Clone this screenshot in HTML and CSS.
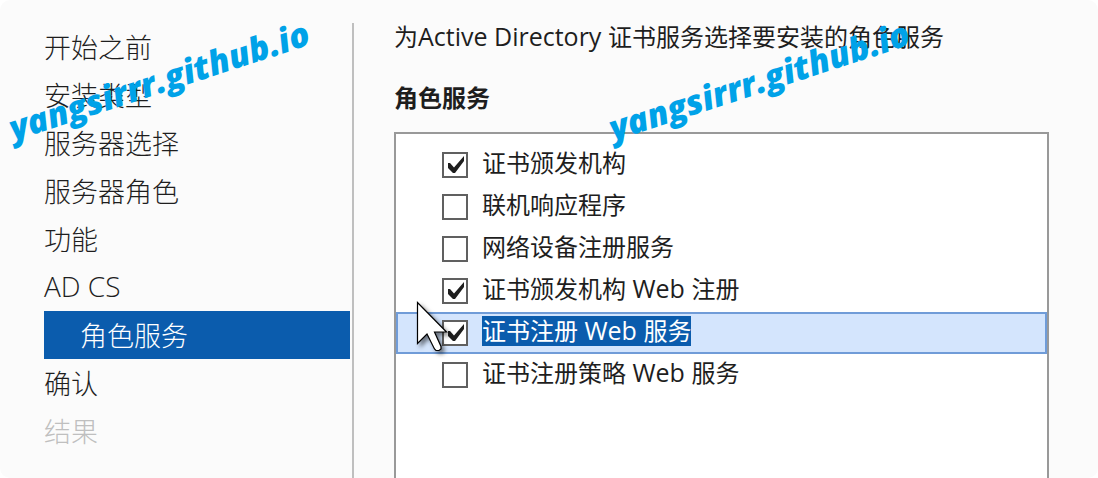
FILE: index.html
```
<!DOCTYPE html>
<html lang="zh-CN">
<head>
<meta charset="utf-8">
<meta name="viewport" content="width=device-width, initial-scale=1">
<title>角色服务</title>
<link rel="stylesheet" href="styles.css">
</head>
<body>
<div class="wizard">
  <nav class="steps">
    <ul class="step-list">
      <li><a class="step" href="#">开始之前</a></li>
      <li><a class="step" href="#">安装类型</a></li>
      <li><a class="step" href="#">服务器选择</a></li>
      <li><a class="step" href="#">服务器角色</a></li>
      <li><a class="step" href="#">功能</a></li>
      <li><a class="step step-latin" href="#">AD CS</a></li>
      <li><a class="step step-current" href="#" aria-current="step">角色服务</a></li>
      <li><a class="step" href="#">确认</a></li>
      <li><a class="step step-disabled" aria-disabled="true">结果</a></li>
    </ul>
  </nav>
  <main class="content">
    <p class="intro">为<span class="latin">Active Directory </span>证书服务选择要安装的角色服务</p>
    <h1 class="heading">角色服务</h1>
    <div class="roles">
      <label class="role"><input class="check" type="checkbox" checked><span class="name">证书颁发机构</span></label>
      <label class="role"><input class="check" type="checkbox"><span class="name">联机响应程序</span></label>
      <label class="role"><input class="check" type="checkbox"><span class="name">网络设备注册服务</span></label>
      <label class="role"><input class="check" type="checkbox" checked><span class="name">证书颁发机构<span class="latin"> Web </span>注册</span></label>
      <label class="role role-selected"><input class="check" type="checkbox" checked><span class="name">证书注册<span class="latin"> Web </span>服务</span>
        <svg class="cursor" width="34" height="54" viewBox="0 0 34 54" aria-hidden="true">
          <path d="M1.5 1.5V42.5L11 33L18.5 48L20 49.5H23L25 48V45.5L18.5 31H30.5Z" fill="#fff" stroke="#000" stroke-width="1.2"/>
        </svg>
      </label>
      <label class="role"><input class="check" type="checkbox"><span class="name">证书注册策略<span class="latin"> Web </span>服务</span></label>
    </div>
  </main>
  <span class="watermark watermark-left">yangsirrr.github.io</span>
  <span class="watermark watermark-right">yangsirrr.github.io</span>
</div>
</body>
</html>
```
FILE: styles.css
```
* {
  box-sizing: border-box;
}

body {
  margin: 0;
  background: #fff;
  color: #1e1e1e;
  font-family: "Open Sans", "Noto Sans CJK SC", sans-serif;
  font-size: 24px;
}

.wizard {
  position: relative;
  display: flex;
  min-height: 100vh;
  padding-top: 23px;
  overflow: hidden;
  background: #fbfbfb;
  border-radius: 10px;
}

.steps {
  flex: 0 0 354px;
  padding: 0 2px 0 44px;
  border-right: 2px solid #bfbfbf;
}

.step-list {
  margin: 0;
  padding: 0;
  list-style: none;
}

.step {
  display: block;
  padding-top: 2px;
  color: #1e1e1e;
  font-size: 27px;
  font-weight: 300;
  line-height: 46px;
  text-decoration: none;
}

.step-latin {
  padding: 0 0 2px;
  font-size: 28px;
}

.step-current {
  padding-left: 36px;
  background: #0b5cad;
  color: #fff;
}

.step-disabled {
  color: #bfbfbf;
}

.content {
  display: flex;
  flex: 1;
  flex-direction: column;
  min-width: 0;
  padding: 0 49px 0 40px;
}

.latin {
  font-size: 25px;
  line-height: 24px;
}

.intro {
  margin: 0;
  line-height: 28px;
}

.heading {
  margin: 31px 0 0;
  font-size: 24px;
  font-weight: 700;
  line-height: 32px;
}

.roles {
  flex: 1;
  margin-top: 18px;
  padding-top: 10px;
  background: #fff;
  border: 2px solid #999;
  border-bottom: 0;
}

.role {
  position: relative;
  display: flex;
  align-items: center;
  gap: 14px;
  height: 42px;
  padding-left: 46px;
}

.role-selected {
  background: #d4e5fd;
  box-shadow: inset 0 0 0 2px #709cd8;
}

.role-selected .name {
  background: #0b5cad;
  color: #fff;
}

.check {
  width: 26px;
  height: 26px;
  margin: 0;
  appearance: none;
  background: #fff;
  border: 2px solid #606060;
}

.check:checked {
  background: #fff url("data:image/svg+xml,%3Csvg xmlns='http://www.w3.org/2000/svg' viewBox='0 0 22 22'%3E%3Cpath d='M4 9V14L9 19H11L20 7V2L10 13.5L6 9Z' fill='%231e1e1e'/%3E%3C/svg%3E");
}

.name {
  margin-bottom: 4px;
  line-height: 30px;
  white-space: pre;
}

.cursor {
  position: absolute;
  top: -11px;
  left: 20px;
  filter: drop-shadow(3px 3px 2px rgba(0, 0, 0, 0.5));
}

.watermark {
  position: absolute;
  top: 56px;
  color: #00a2e8;
  font-size: 34px;
  font-style: italic;
  font-weight: 800;
  line-height: 48px;
  white-space: nowrap;
  pointer-events: none;
  transform: rotate(-18deg);
}

.watermark-left {
  left: 2px;
}

.watermark-right {
  left: 602px;
}
```
